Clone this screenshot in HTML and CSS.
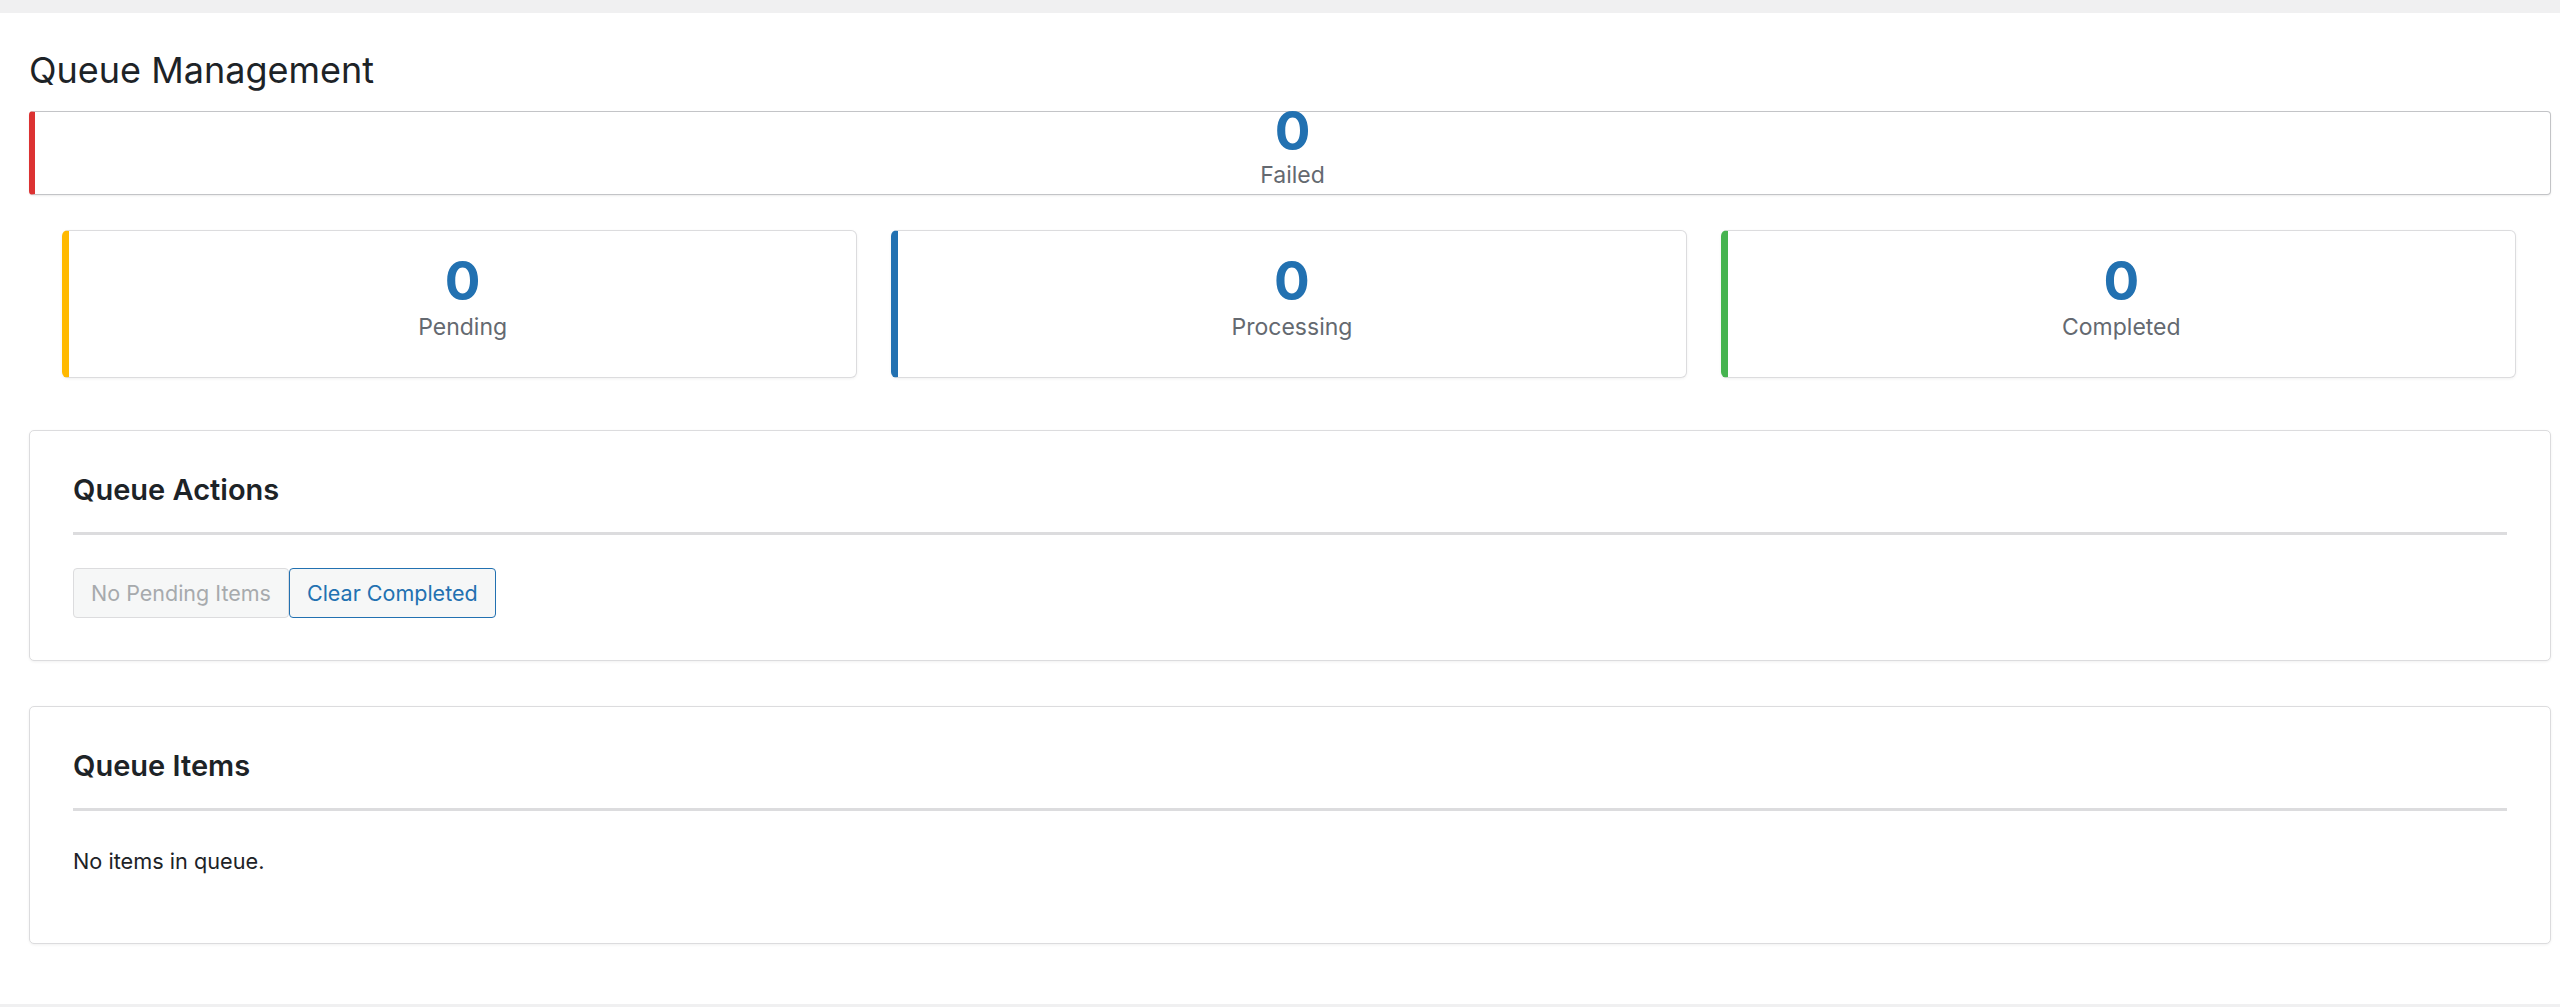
FILE: index.html
```html
<!DOCTYPE html>
<html lang="en">
<head>
<meta charset="utf-8">
<title>Queue Management</title>
<link rel="stylesheet" href="styles.css">
</head>
<body>
<div class="page">
  <h1 class="page-title">Queue Management</h1>

  <div class="failed-card">
    <div class="stat-number">0</div>
    <div class="stat-label">Failed</div>
  </div>

  <div class="stats">
    <div class="stat-card stat-pending">
      <div class="stat-number">0</div>
      <div class="stat-label">Pending</div>
    </div>
    <div class="stat-card stat-processing">
      <div class="stat-number">0</div>
      <div class="stat-label">Processing</div>
    </div>
    <div class="stat-card stat-completed">
      <div class="stat-number">0</div>
      <div class="stat-label">Completed</div>
    </div>
  </div>

  <section class="panel panel-actions">
    <h2 class="panel-title">Queue Actions</h2>
    <div class="button-group">
      <button class="btn btn-disabled" disabled>No Pending Items</button>
      <button class="btn btn-outline">Clear Completed</button>
    </div>
  </section>

  <section class="panel panel-items">
    <h2 class="panel-title">Queue Items</h2>
    <p class="empty-text">No items in queue.</p>
  </section>
</div>
</body>
</html>
```

FILE: styles.css
```css
* {
  box-sizing: border-box;
}

html, body {
  margin: 0;
  padding: 0;
}

body {
  background: #f0f0f1;
  font-family: Inter, "Liberation Sans", Arial, sans-serif;
  color: #1d2327;
  font-size: 21.7px;
}

.page {
  margin-top: 13px;
  background: #ffffff;
  padding: 34px 9px 60px 29px;
}

.page-title {
  margin: 0 0 18px;
  font-size: 36px;
  line-height: 46px;
  font-weight: 400;
  color: #1d2327;
}

.stat-number {
  font-size: 53px;
  line-height: 1;
  font-weight: 700;
  color: #2271b1;
}

.stat-label {
  font-size: 23px;
  line-height: 1.3;
  color: #646970;
}

.failed-card {
  background: #fff;
  border: 1px solid #c3c4c7;
  border-left: 6px solid #dc3232;
  border-radius: 4px;
  box-shadow: 0 1px 2px rgba(0, 0, 0, 0.08);
  text-align: center;
  padding: 0 0 3.5px;
}

.failed-card .stat-number {
  margin-top: -7px;
}

.failed-card .stat-label {
  margin-top: 3px;
}

.stats {
  display: grid;
  grid-template-columns: repeat(3, 1fr);
  gap: 34px;
  margin: 35px 35px 0 33px;
}

.stat-card {
  background: #fff;
  border: 1px solid #dcdcde;
  border-left-width: 7px;
  border-radius: 6px;
  box-shadow: 0 1px 3px rgba(0, 0, 0, 0.06);
  text-align: center;
  padding: 24px 0 34px;
}

.stat-card .stat-label {
  margin-top: 5px;
}

.stat-pending {
  border-left-color: #ffb900;
}

.stat-processing {
  border-left-color: #2271b1;
}

.stat-completed {
  border-left-color: #46b450;
}

.panel {
  background: #fff;
  border: 1px solid #dcdcde;
  border-radius: 5px;
  box-shadow: 0 1px 3px rgba(0, 0, 0, 0.06);
  padding: 41px 43px 42px;
}

.panel-actions {
  margin-top: 52px;
}

.panel-items {
  margin-top: 45px;
}

.panel-title {
  margin: 0;
  font-size: 29px;
  line-height: 36px;
  font-weight: 600;
  color: #1d2327;
  padding-bottom: 24px;
  border-bottom: 3px solid #dcdcde;
}

.button-group {
  display: flex;
  margin-top: 33px;
}

.btn {
  font-family: inherit;
  font-size: 21.5px;
  height: 50px;
  line-height: 48px;
  padding: 0 17px;
  border-radius: 4px;
  background: #f6f7f7;
  border: 1px solid #dcdcde;
  margin: 0;
  cursor: pointer;
}

.btn-disabled {
  color: #a7aaad;
  cursor: default;
}

.btn-outline {
  color: #2271b1;
  border-color: #2271b1;
}

.empty-text {
  margin: 34px 0 23px;
  font-size: 21.7px;
  line-height: 1.5;
  color: #1d2327;
}
```
